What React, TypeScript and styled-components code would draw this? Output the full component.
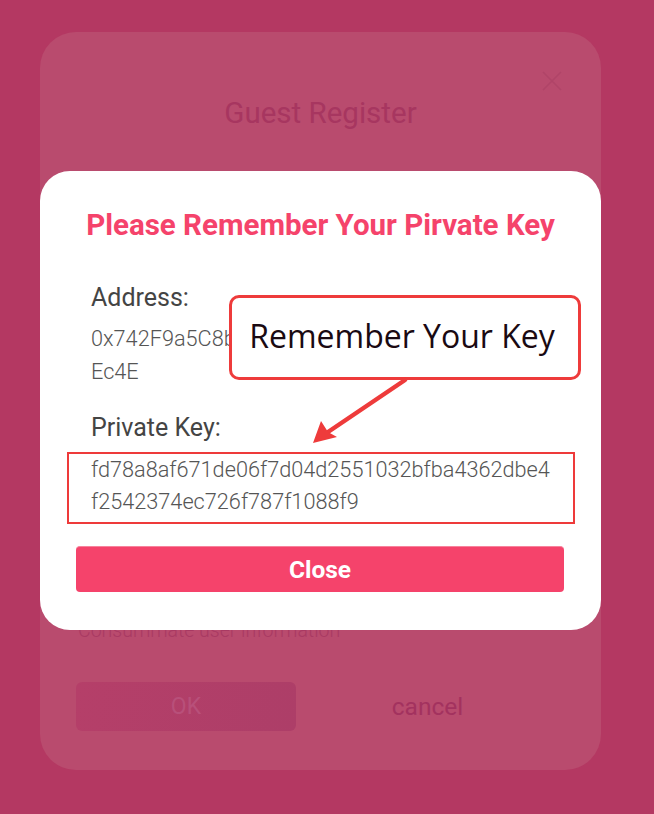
import React from "react";
import styled, { createGlobalStyle } from "styled-components";

const Global = createGlobalStyle`
  html, body { margin: 0; padding: 0; }
  body {
    background: #b43862;
    font-family: Roboto, "Noto Sans", sans-serif;
    width: 654px;
    height: 814px;
    overflow: hidden;
  }
`;

const Page = styled.div`
  position: relative;
  width: 654px;
  height: 814px;
  padding: 32px 53px 44px 40px;
  box-sizing: border-box;
`;

const BackPanel = styled.div`
  position: relative;
  height: 100%;
  background: #b94b6e;
  border-radius: 36px;
  display: flex;
  flex-direction: column;
  padding: 0 36px;
  box-sizing: border-box;
`;

const BackClose = styled.div`
  position: absolute;
  top: 39px;
  right: 39px;
  width: 20px;
  height: 20px;
  color: #b04468;
`;

const BackTitle = styled.div`
  margin-top: 64px;
  text-align: center;
  font-size: 29.5px;
  line-height: 34px;
  color: #a73660;
`;

const BackInfo = styled.div`
  margin-top: 489px;
  padding-left: 2px;
  font-size: 19.5px;
  font-weight: 300;
  line-height: 24px;
  color: #a93a63;
`;

const BackActions = styled.div`
  margin-top: 39px;
  display: grid;
  grid-template-columns: 220px 1fr;
  align-items: center;
`;

const BackOk = styled.div`
  height: 49px;
  border-radius: 6px;
  background: linear-gradient(100deg, #b53f69, #ad3e68);
  display: flex;
  align-items: center;
  justify-content: center;
  color: #b8507a;
  font-size: 23px;
`;

const BackCancel = styled.div`
  text-align: center;
  font-size: 24.5px;
  color: #a3325f;
  padding-right: 6px;
`;

const Modal = styled.div`
  position: absolute;
  left: 40px;
  top: 171px;
  width: 561px;
  height: 459px;
  background: #ffffff;
  border-radius: 30px;
  padding: 36px 36px 0 27px;
  box-sizing: border-box;
  display: flex;
  flex-direction: column;
`;

const Title = styled.div`
  text-align: center;
  font-size: 29.5px;
  font-weight: 700;
  line-height: 36px;
  color: #f5436b;
  margin-left: 9px;
  white-space: nowrap;
`;

const Label = styled.div<{ $gap: number }>`
  margin-top: ${(p) => p.$gap}px;
  padding-left: 24px;
  font-size: 25px;
  line-height: 30px;
  color: #444444;
`;

const Value = styled.div`
  margin-top: 8.5px;
  margin-left: 24px;
  width: 465px;
  font-size: 21.7px;
  font-weight: 300;
  line-height: 33px;
  color: #555555;
  word-break: break-all;
`;

const KeyBox = styled.div`
  margin-top: 9px;
  width: 508px;
  border: 2px solid #ee3a3a;
  box-sizing: border-box;
  padding: 0 17px 4px 22px;
  font-size: 21.7px;
  font-weight: 300;
  line-height: 32px;
  color: #555555;
  word-break: break-all;
`;

const CloseButton = styled.button`
  margin: 22px 0 0 9px;
  width: 488px;
  height: 46px;
  border: none;
  border-top: 1px solid #f7839c;
  border-radius: 4px;
  background: #f5436b;
  color: #ffffff;
  font-family: Roboto, sans-serif;
  font-size: 24.5px;
  font-weight: 700;
  cursor: pointer;
`;

const Callout = styled.div`
  position: absolute;
  left: 229px;
  top: 295px;
  width: 352px;
  height: 85px;
  box-sizing: border-box;
  border: 3px solid #ee3b3b;
  border-radius: 10px;
  background: #ffffff;
  display: flex;
  align-items: center;
  justify-content: center;
  padding: 0 6px 4px 0;
  font-family: "Open Sans", "Noto Sans", sans-serif;
  font-size: 32px;
  color: #1a0a12;
`;

const Arrow = styled.svg`
  position: absolute;
  left: 300px;
  top: 376px;
  width: 120px;
  height: 76px;
  overflow: visible;
`;

export default function App() {
  return (
    <>
      <Global />
      <Page>
        <BackPanel>
          <BackClose>
            <svg width="20" height="20" viewBox="0 0 20 20">
              <path d="M1 1 L19 19 M19 1 L1 19" stroke="currentColor" strokeWidth="1.6" />
            </svg>
          </BackClose>
          <BackTitle>Guest Register</BackTitle>
          <BackInfo>Consummate user information</BackInfo>
          <BackActions>
            <BackOk>OK</BackOk>
            <BackCancel>cancel</BackCancel>
          </BackActions>
        </BackPanel>
        <Modal>
          <Title>Please Remember Your Pirvate Key</Title>
          <Label $gap={40}>Address:</Label>
          <Value>0x742F9a5C8b1d3e4f6a7b8c9d0e1f2a3b4c5d6Ec4E</Value>
          <Label $gap={25.5}>Private Key:</Label>
          <KeyBox>fd78a8af671de06f7d04d2551032bfba4362dbe4f2542374ec726f787f1088f9</KeyBox>
          <CloseButton>Close</CloseButton>
        </Modal>
        <Callout>Remember Your Key</Callout>
        <Arrow viewBox="300 376 120 76">
          <path d="M405 380 L328 432" stroke="#ee3b3b" strokeWidth="4.5" strokeLinecap="round" />
          <path d="M313 443 L321 421 L328 432 L337 437 Z" fill="#ee3b3b" />
        </Arrow>
      </Page>
    </>
  );
}
